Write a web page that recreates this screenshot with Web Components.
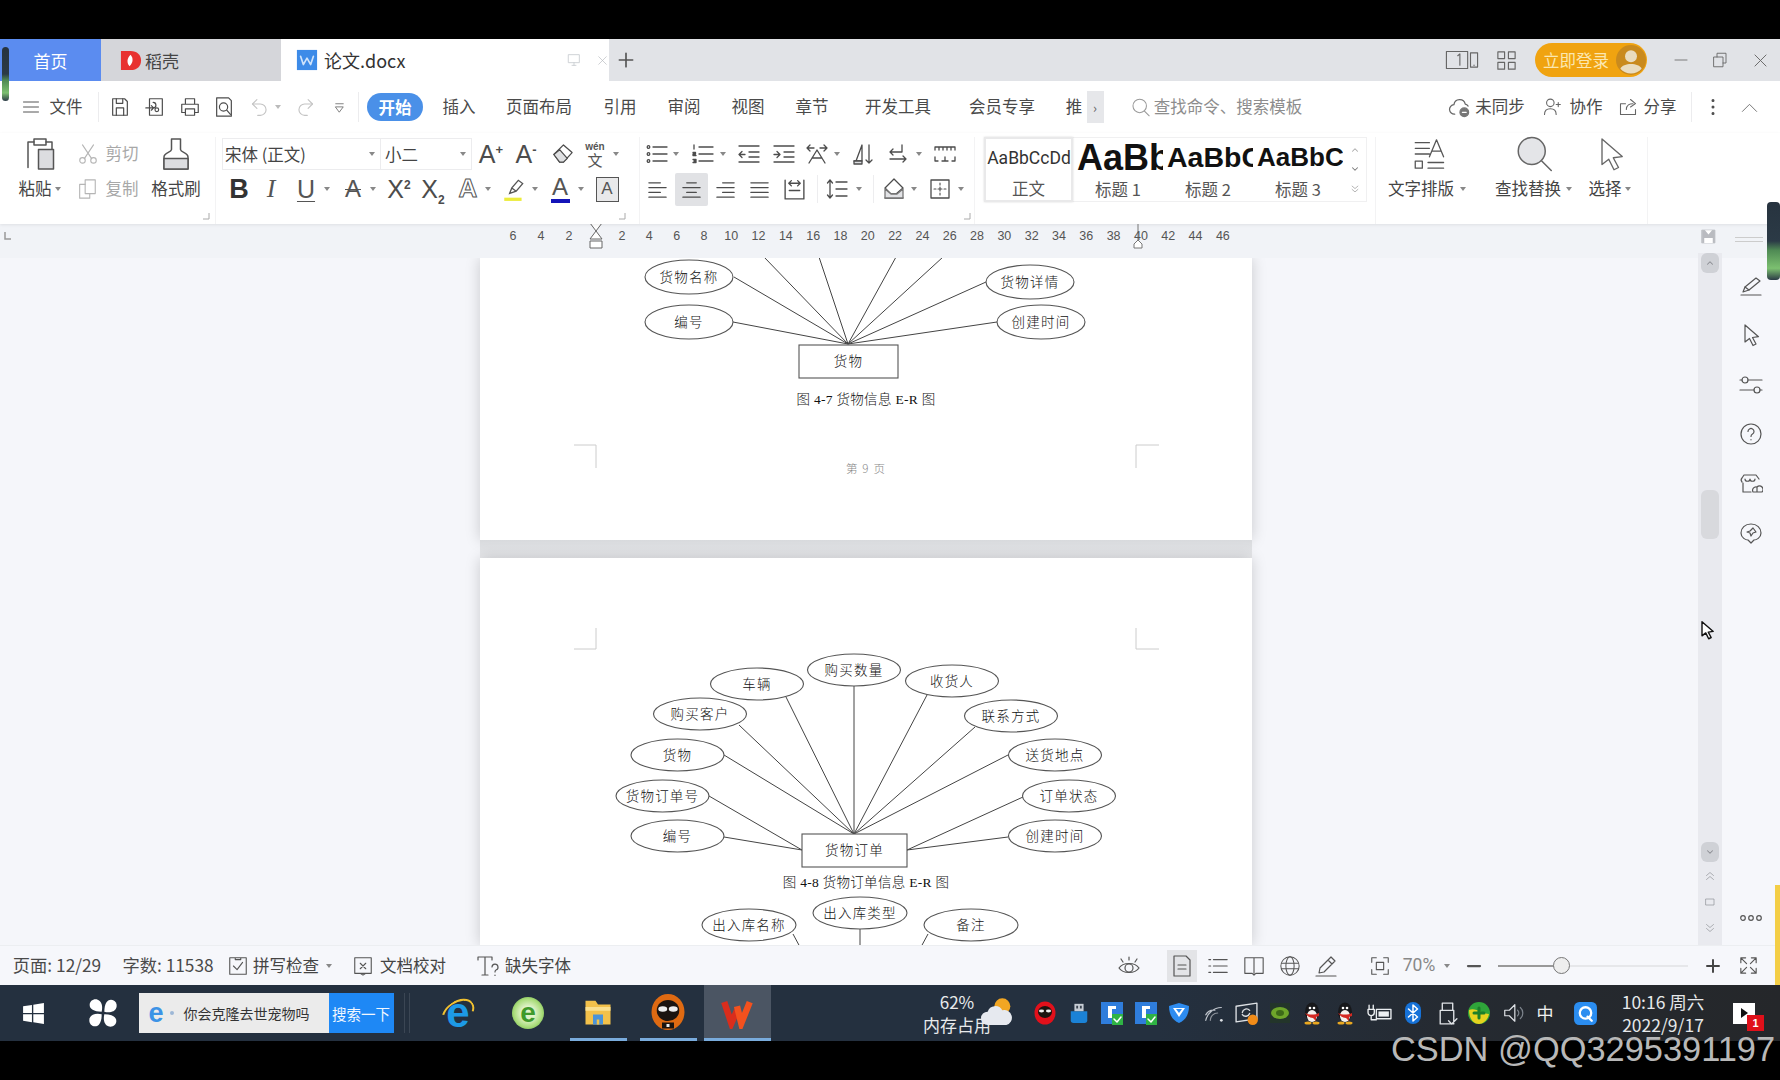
<!DOCTYPE html>
<html lang="zh">
<head>
<meta charset="utf-8">
<title>论文.docx</title>
<style>
  html, body { margin: 0; height: 100%; background: #000; overflow: hidden; }
  body { font-family: "Noto Sans CJK SC", "Noto Sans", sans-serif; color: #444; }
</style>
</head>
<body>
<screen-frame>
  <wps-tabbar></wps-tabbar>
  <wps-menubar></wps-menubar>
  <wps-ribbon></wps-ribbon>
  <wps-ruler></wps-ruler>
  <wps-workspace></wps-workspace>
  <wps-statusbar></wps-statusbar>
  <win-taskbar></win-taskbar>
</screen-frame>
<screen-overlays></screen-overlays>

<script>
// Iconos dibujados a mano, viewBox 24x24
const ICONS = {
  menu: '<path d="M3 6h18M3 12h18M3 18h18"/>',
  save: '<path d="M4 3h13l3 3v15H4z"/><path d="M8 21v-8h8v8M8 3v5h7V3"/>',
  exportdoc: '<path d="M6 3h14v18H6z"/><path d="M2 13h8a3 3 0 0 0 0-6M8 10.500L10.500 13 8 15.500"/><circle cx="14" cy="15" r="2"/>',
  print: '<path d="M7 9V3h10v6M7 18H3V9h18v9h-4"/><path d="M7 14h10v7H7z"/>',
  preview: '<path d="M4 2h13l3 3v17H4z"/><circle cx="11.500" cy="12" r="4.500"/><path d="M15 15.500l4 4.500"/>',
  undo: '<path d="M9 3L4 8l5 5"/><path d="M4 8h9a6.500 6.500 0 0 1 0 13h-3"/>',
  redo: '<path d="M15 3l5 5-5 5"/><path d="M20 8h-9a6.500 6.500 0 0 0 0 13h3"/>',
  qa: '<path d="M6 6h12M6 11h12l-6 8z"/>',
  paste: '<path d="M4 21V4h4V2h8v2h4v5"/><path d="M8 4v2h8V4"/><path d="M11 9h10v13H11z" fill="#dcdde0"/>',
  cut: '<circle cx="6" cy="19" r="3"/><circle cx="18" cy="19" r="3"/><path d="M8 17L18 2M16 17L6 2"/>',
  copy: '<path d="M10 2h11v15H10z"/><path d="M10 7H4v15h11v-5"/>',
  brush: '<path d="M9 2h6v7c0 2 5 2 5 5v8H4v-8c0-3 5-3 5-5z"/><path d="M4 15h16v7H4z" fill="#dcdde0"/>',
  eraser: '<path d="M3 12L13 2l9 8-9 10H9z"/><path d="M3 12l6 8h4l4-4-8-9z" fill="#dfe0e2"/>',
  bullets: '<circle cx="3.500" cy="5" r="1.300"/><circle cx="3.500" cy="12" r="1.300"/><circle cx="3.500" cy="19" r="1.300"/><path d="M8 5h14M8 12h14M8 19h14"/>',
  numbers: '<path d="M8 5h14M8 12h14M8 19h14"/><path d="M3 3v4M2 10.500h2.500V12H2v1.500h3M2 17.500h3V19H3h2v1.500H2"/>',
  outdent: '<path d="M2 4h20M12 10h10M12 15h10M2 20h20M8 12.500H2M5 9.500l-3 3 3 3"/>',
  indent: '<path d="M2 4h20M12 10h10M12 15h10M2 20h20M2 12.500h6M5 9.500l3 3-3 3"/>',
  cjk: '<path d="M2 6h7M5 3L2 6l3 3M22 6h-7M19 3l3 3-3 3M12 8L4 21M12 8l8 13M7 16h10"/>',
  sort: '<path d="M5 19L11 3v16H3"/><path d="M3 19h8v3H3z" fill="#dcdde0"/><path d="M18 3v18M15 18l3 3 3-3"/>',
  linebreak: '<path d="M16 3v7H4M7 7l-3 3 3 3M4 17h16M17 14l3 3-3 3"/>',
  rulers: '<path d="M2 5h20v3M2 5v3M6 5v3M10 5v3M14 5v3M18 5v3M2 15v4h3M22 15v4h-3M12 15v4M9 19h6"/>',
  left: '<path d="M3 5h12M3 10h18M3 15h12M3 20h18"/>',
  center: '<path d="M7 5h10M3 10h18M7 15h10M3 20h18"/>',
  right: '<path d="M9 5h12M3 10h18M9 15h12M3 20h18"/>',
  justify: '<path d="M3 5h18M3 10h18M3 15h18M3 20h18"/>',
  dist: '<path d="M3 3v18M21 3v18M3 21h18M7 6h10M9 3.500L6.500 6 9 8.500M15 3.500L17.500 6 15 8.500M7 13h10"/>',
  linespace: '<path d="M5 3v18M2.500 6L5 3l2.500 3M2.500 18L5 21l2.500-3M11 5h11M11 12h11M11 19h11"/>',
  shading: '<path d="M12 2l9 9-7 6H9l-6-6z"/><path d="M3 21h18"/><path d="M3 12l6 5h6l6-5v9H3z" fill="#e2e3e6" stroke="#777"/>',
  border: '<path d="M3 3h18v18H3z"/><path d="M12 6v2M12 10v4M12 16v2M6 12h2M10 12h4M16 12h2" stroke-width="1.100"/>',
  textlayout: '<path d="M3 4h10M3 8h10M3 12h10M13 14L18 2l5 12M15 10h6M3 17h5v5H3zM12 18h11M12 22h11"/>',
  search: '<circle cx="11" cy="10" r="8.500"/><path d="M17 16.500l6 6"/>',
  searchfill: '<circle cx="10.500" cy="10" r="9" fill="#e4e5e8"/><path d="M17 16.500l6.500 6.500"/>',
  cursor: '<path d="M6 2v17l4.500-3.500 3.500 7 3-1.500-3.500-6.500 6-.8z"/>',
  cloud: '<path d="M7 19a5 5 0 0 1-.8-10A6 6 0 0 1 18 8.500a5 5 0 0 1 3 2"/><circle cx="17" cy="17" r="4.500" fill="#777" stroke="#777"/><path d="M15 17h4" stroke="#fff"/>',
  collab: '<circle cx="10" cy="7" r="4.500"/><path d="M3 21c0-5 3-7 7-7s7 2 7 7M17 9h5M19.500 6.500v5"/>',
  share: '<path d="M9 8H3v13h18v-6"/><path d="M10 15c0-5 4-7 8-7M15 3l6 5-6 4"/>',
  dots: '<circle cx="12" cy="5" r="1" fill="#555"/><circle cx="12" cy="12" r="1" fill="#555"/><circle cx="12" cy="19" r="1" fill="#555"/>',
  chevup: '<path d="M3 17l9-9 9 9"/>',
  monitor: '<path d="M4 4h16v12H4zM9 20h6M12 16v4"/>',
  close: '<path d="M5 5l14 14M19 5L5 19"/>',
  plus: '<path d="M4 12h16M12 4v16"/>',
  reader: '<path d="M1 6h15v12H1zM1 18h15M18 7h5v10h-5zM20.500 15.500v.3M9 9l1.500-1.300v8"/>',
  grid: '<path d="M3 3h7v7H3zM14 3h7v7h-7zM3 14h7v7H3zM14 14h7v7h-7z"/>',
  minimize: '<path d="M4 12h16"/>',
  restore: '<path d="M4 8h12v13H4zM8 8V3h12v13h-4"/>',
  check: '<path d="M3 3h18v18H3zM9 3v2h6V3"/><path d="M7 12l4 4 6-8"/>',
  proof: '<path d="M3 3h18v17H3zM9 20l3 2 3-2M9 9l6 6M15 9l-6 6"/>',
  fontmiss: '<path d="M2 3h14M9 3v18M6 21h6M16 3v3M2 3v3"/><path d="M16 13a3 3 0 1 1 4 3c-1 .5-1 1-1 2M19 21v.5"/>',
  eye: '<path d="M2 14c4-6 16-6 20 0-4 6-16 6-20 0z"/><circle cx="12" cy="14" r="4"/><path d="M12 3v3M4 5l2 3M20 5l-2 3"/>',
  pageview: '<path d="M4 2h12l4 4v16H4z"/><path d="M8 11h8M8 15h8"/>',
  outline: '<path d="M7 5h15M7 12h15M7 19h15M2 5h2M2 12h2M2 19h2"/>',
  book: '<path d="M2 3h20v17h-8l-2 2-2-2H2zM12 3v17"/>',
  globe: '<circle cx="12" cy="12" r="10"/><ellipse cx="12" cy="12" rx="4.500" ry="10"/><path d="M2.500 9h19M2.500 15h19"/>',
  pen: '<path d="M2 22h20M5 19l1-5L17 3l4 4-11 11zM14 6l4 4"/>',
  fit: '<path d="M3 8V3h5M16 3h5v5M21 16v5h-5M8 21H3v-5M8 8h8v8H8z"/>',
  minus: '<path d="M4 12h16" stroke-width="3"/>',
  plusb: '<path d="M4 12h16M12 4v16" stroke-width="2.600"/>',
  expand: '<path d="M4 4l6 6M4 9V4h5M20 4l-6 6M15 4h5v5M4 20l6-6M4 15v5h5M20 20l-6-6M20 15v5h-5"/>',
  railpen: '<path d="M2 21h20M4 18l2-5L17 4l4 3-11 9z"/><path d="M6 13l4 3"/>',
  sliders: '<path d="M9 7h14M1 7h2M1 17h14M21 17h2"/><circle cx="6" cy="7" r="3"/><circle cx="18" cy="17" r="3"/>',
  help: '<circle cx="12" cy="12" r="10"/><path d="M9 9.500a3 3 0 1 1 4.500 2.600c-1 .6-1.500 1.200-1.500 2.400M12 17.500v.3"/>',
  store: '<path d="M3 10a3 3 0 0 1 0-4l2-3h12l3 4M4 11v9h8M6 7c0 3 5 3 5 0M11 7c0 3 5 3 5 0"/><path d="M14 20a3.500 3.500 0 0 1 4-5 3.500 3.500 0 0 1 5 5zM18 15v5"/>',
  pinbubble: '<path d="M12 3c6 0 10 4 10 9s-5 7-7 7l-3 3-3-3c-2 0-7-2-7-7s4-9 10-9z"/><path d="M14 7l3 4-3 1-2 3-1-3-3-1 3-1z"/>',
  ooo: '<circle cx="4" cy="12" r="2.300"/><circle cx="12" cy="12" r="2.300"/><circle cx="20" cy="12" r="2.300"/>',
  stepup: '<path d="M5 11l7-6 7 6M5 19l7-6 7 6"/>',
  stepdown: '<path d="M5 5l7 6 7-6M5 13l7 6 7-6"/>',
  square: '<path d="M4 6h16v12H4z"/>',
  tri: '<path d="M6 15l6-6 6 6" stroke-width="2.500"/>',
  trid: '<path d="M6 9l6 6 6-6" stroke-width="2.500"/>',
  savebox: '<path d="M3 3h18v18H3z" fill="#b9bbc0" stroke="#b9bbc0"/><path d="M7 3l5 6 5-6zM6 14h12v7H6z" fill="#fff" stroke="none"/>',
  // logos de color
  daoke: '<path d="M2 2h10c7 0 11 4 11 10s-4 10-11 10H2z" fill="#e8312f" stroke="none"/><path d="M12 6c3 3 3 8-1 12-3-3-3-8 1-12z" fill="#fff" stroke="none"/>',
  wdoc: '<path d="M1 1h22v22H1z" fill="#3d8be8" stroke="none"/><path d="M5 8l3 9 4-7 4 7 3-9" stroke="#cfe3fb" stroke-width="1.800" fill="none"/>',
  avatar: '<circle cx="12" cy="12" r="12" fill="#c98a1e" stroke="none"/><circle cx="12" cy="9" r="4.800" fill="#e9dcc0" stroke="none"/><path d="M3.500 19c2-5 15-5 17 0-4 5-13 5-17 0z" fill="#e9dcc0" stroke="none"/>',
  win: '<path d="M2 5l8.500-1.200V11.500H2zM11.800 3.600L22 2v9.500H11.800zM2 12.800h8.500v7.500L2 19zM11.800 12.800H22V22l-10.200-1.500z" fill="#fff" stroke="none"/>',
  pinwheel: '<g fill="#fff" stroke="none"><path d="M11 11C5 11 2 9 2 6c0-3 3-5 6-4 3 1 4 5 3 9z"/><path d="M13 11c0-6 2-9 5-9 3 0 5 3 4 6-1 3-5 4-9 3z"/><path d="M13 13c6 0 9 2 9 5 0 3-3 5-6 4-3-1-4-5-3-9z"/><path d="M11 13c0 6-2 9-5 9-3 0-5-3-4-6 1-3 5-4 9-3z"/></g>',
  folder: '<path d="M2 3h8l2 3h10v16H2z" fill="#f3c14b" stroke="none"/><path d="M2 8h20v3H2z" fill="#fbe08f" stroke="none"/><path d="M8 14h8v8H8z" fill="#4b93d8" stroke="none"/><path d="M11 18h2v4h-2z" fill="#f3c14b" stroke="none"/>',
  fox: '<ellipse cx="12" cy="12" rx="11" ry="12" fill="#df6a12" stroke="none"/><ellipse cx="12" cy="11" rx="7.500" ry="7" fill="#1b1410" stroke="none"/><ellipse cx="8.500" cy="10" rx="3" ry="1.800" fill="#eee" stroke="none"/><ellipse cx="15.500" cy="10" rx="3" ry="1.800" fill="#eee" stroke="none"/><path d="M8 19h8v4H8z" fill="#1b1410" stroke="none"/><path d="M11 20h2v2h-2z" fill="#eee" stroke="none"/>',
  wps: '<path d="M3 5l5 15 4-9" stroke="#d92d1c" stroke-width="4.500" stroke-linejoin="miter" stroke-linecap="butt"/><path d="M12 8l3 12 6-15" stroke="#f4511e" stroke-width="4.500" stroke-linejoin="miter" stroke-linecap="butt"/>',
  weather: '<circle cx="16" cy="7" r="6" fill="#f2a623" stroke="none"/><path d="M5 21a5 5 0 0 1 0-10 6 6 0 0 1 11-1 5.500 5.500 0 0 1 3 11z" fill="#e6e9ef" stroke="none"/>',
  redfox: '<ellipse cx="12" cy="12" rx="10.500" ry="11.500" fill="#e2101b" stroke="none"/><ellipse cx="12" cy="11" rx="7" ry="6" fill="#1b1410" stroke="none"/><ellipse cx="8.500" cy="10" rx="2.600" ry="1.400" fill="#eee" stroke="none"/><ellipse cx="15.500" cy="10" rx="2.600" ry="1.400" fill="#eee" stroke="none"/>',
  usbblue: '<path d="M3 10h18v10a3 3 0 0 1-3 3H6a3 3 0 0 1-3-3z" fill="#1b82d6" stroke="none"/><path d="M7 2h10v8H7z" fill="#c6ccd4" stroke="none"/><path d="M9 4h2v3H9zM13 4h2v3h-2z" fill="#3a4350" stroke="none"/>',
  tgreen: '<path d="M1 1h22v22H1z" fill="#2f7ddc" stroke="none"/><path d="M8 5h8v3h-4v9H8z" fill="#fff" stroke="none"/><path d="M12 13h11v11H12z" fill="#2fb344" stroke="none"/><path d="M14 18l3 3 4-5" stroke="#fff" stroke-width="1.500" fill="none"/>',
  shield: '<path d="M12 2l10 3c0 8-3 14-10 17C5 19 2 13 2 5z" fill="#2e8cf0" stroke="none"/><path d="M6 7l6 9 6-9z" fill="#fff" stroke="none"/><path d="M9 8l3 4 3-4z" fill="#2e8cf0" stroke="none"/>',
  wifi: '<path d="M3 20a18 18 0 0 1 17-14M3 14a10 10 0 0 1 10-5" stroke="#bfc4cb"/><path d="M8 20a8 8 0 0 1 8-8" stroke="#8d939b"/><circle cx="20" cy="20" r="1.500" fill="#dfe2e6" stroke="none"/>',
  sync: '<path d="M2 5l20-3v15L2 20z" stroke="#dde0e4"/><path d="M8 11a4 4 0 0 1 7-2M15 12a4 4 0 0 1-7 1" stroke="#dde0e4"/><circle cx="18" cy="18" r="5" fill="#f28c18" stroke="none"/>',
  nvidia: '<path d="M2 2h20v20H2z" fill="#23352a" stroke="none"/><ellipse cx="12" cy="12" rx="9" ry="6" fill="#6ea62a" stroke="none"/><ellipse cx="12" cy="12" rx="4" ry="3" fill="#3d6a18" stroke="none"/>',
  qq: '<ellipse cx="12" cy="11" rx="7" ry="9.500" fill="#17181b" stroke="none"/><ellipse cx="12" cy="15" rx="5" ry="6" fill="#f5f2ec" stroke="none"/><path d="M5 12c4 2 10 2 14 0v3l-3 1v4l-3-3c-3 0-6-2-8-5z" fill="#d42a22" stroke="none"/><ellipse cx="8" cy="22" rx="3.500" ry="1.500" fill="#eaa820" stroke="none"/><ellipse cx="16" cy="22" rx="3.500" ry="1.500" fill="#eaa820" stroke="none"/><circle cx="10" cy="7" r="1.300" fill="#fff" stroke="none"/><circle cx="14" cy="7" r="1.300" fill="#fff" stroke="none"/>',
  power: '<path d="M9 8h14v9H9z" stroke="#eceff2"/><path d="M11 10h10v5H11z" fill="#eceff2" stroke="none"/><path d="M2 4v4M6 4v4M1 8h6v3a3 3 0 0 1-6 0zM4 14v4h5" stroke="#eceff2"/>',
  bt: '<rect x="4" y="1" width="16" height="22" rx="8" fill="#1672d8" stroke="none"/><path d="M7.500 8l9 8-4.500 4V4l4.500 4-9 8" stroke="#fff" fill="none" stroke-width="1.500"/>',
  usbw: '<path d="M7 2h10v7H7zM5 9h13v13H5zM13 19l3 3 5-5" stroke="#dfe2e6"/>',
  greenplus: '<circle cx="12" cy="12" r="11" fill="#2fa53a" stroke="none"/><path d="M2 9c6-3 14 4 20 4-1 6-6 10-10 10-6 0-10-6-10-14z" fill="#e6d31f" stroke="none"/><path d="M12 7v10M7 12h10" stroke="#1c7f2a" stroke-width="3"/>',
  speaker: '<path d="M3 9h5l6-6v18l-6-6H3z" stroke="#dfe2e6"/><path d="M17 9a4 4 0 0 1 0 6M20 6a8 8 0 0 1 0 12" stroke="#7d848c"/>',
  qblue: '<rect x="1" y="1" width="22" height="22" rx="5" fill="#2b8df0" stroke="none"/><circle cx="12" cy="11.500" r="5.500" stroke="#fff" stroke-width="2.200"/><path d="M14 15l4 4" stroke="#fff" stroke-width="2.200"/>',
  cursorw: '<path d="M6 2v17l4.500-3.500 3.500 7 3-1.500-3.500-6.500 6-.8z" fill="#fff" stroke="#111" stroke-width="1.700"/>'
};

const ic = (n, s = 22, c = '#4c4c4c', w = 1.300) => `<ui-icon n="${n}" s="${s}" c="${c}" w="${w}"></ui-icon>`;
const tx = (t, s = 16.500, c = '#444', x = '') => `<span style="font-size:${s}px;line-height:1.200;color:${c};${x}">${t}</span>`;
const arw = (c = '#888') => `<i style="display:block;width:0;height:0;border:3.500px solid transparent;border-top:4px solid ${c};border-bottom:0"></i>`;

// Reparte hijos en una fila flex: cada [cx, html] queda centrado en cx
function spread(origin, items, style = '') {
  let prevRight = origin;
  const cells = items.map(([cx, html], i) => {
    const gapL = i ? cx - items[i - 1][0] : (cx - origin) * 2;
    const gapR = i < items.length - 1 ? items[i + 1][0] - cx : gapL;
    const w = Math.min(gapL, gapR);
    const ml = cx - w / 2 - prevRight;
    prevRight = cx + w / 2;
    return `<div class="c" style="width:${w}px;margin-left:${ml}px">${html}</div>`;
  }).join('');
  return `<div class="row" style="${style}">${cells}</div>`;
}

const BASE = `
  .row { display: flex; align-items: center; }
  .c { flex: none; display: flex; align-items: center; justify-content: center; white-space: nowrap; }
  .c > * { flex: none; }
`;

class UiIcon extends HTMLElement {
  constructor() {
    super();
    this.attachShadow({ mode: 'open' });
  }
  connectedCallback() {
    const s = this.getAttribute('s') || 22;
    const c = this.getAttribute('c') || '#4c4c4c';
    const w = this.getAttribute('w') || 1.300;
    this.shadowRoot.innerHTML = `
      <style>:host { display: inline-flex; flex: none; } svg { display: block; }</style>
      <svg width="${s}" height="${s}" viewBox="0 0 24 24" fill="none" stroke="${c}" stroke-width="${w}"
           stroke-linecap="round" stroke-linejoin="round">${ICONS[this.getAttribute('n')] || ''}</svg>`;
  }
}
customElements.define('ui-icon', UiIcon);

class ScreenFrame extends HTMLElement {
  constructor() {
    super();
    this.attachShadow({ mode: 'open' });
    this.shadowRoot.innerHTML = `
      <style>
        :host { display: flex; flex-direction: column; width: 1780px; height: 1080px; padding: 39px 0; box-sizing: border-box; background: #000; overflow: hidden; }
      </style>
      <slot></slot>`;
  }
}
customElements.define('screen-frame', ScreenFrame);

class WpsTabbar extends HTMLElement {
  constructor() {
    super();
    this.attachShadow({ mode: 'open' });
    this.shadowRoot.innerHTML = `
      <style>
        ${BASE}
        :host { display: flex; height: 42px; background: #e1e3e7; flex: none; }
        .tab { flex: none; display: flex; align-items: center; box-sizing: border-box; }
        .home { width: 101px; background: #5b8cf0; justify-content: center; color: #fff; font-size: 17px; }
        .daoke { width: 180px; background: #d5d6da; padding-left: 18px; gap: 3px; font-size: 17px; color: #444; }
        .doc { width: 328px; background: #fff; padding-left: 15px; gap: 6px; font-size: 18px; color: #333; }
        .doc .tools { margin-left: auto; display: flex; gap: 14px; align-items: center; }
        .plus { width: 34px; display: flex; align-items: center; justify-content: center; }
        .pill { display: flex; align-items: center; justify-content: space-between; box-sizing: border-box; width: 112px; height: 34px; padding: 0 1px 0 8px; border-radius: 17px; background: #f0a310; color: #fbe7b0; font-size: 16.500px; }
      </style>
      <div class="tab home">首页</div>
      <div class="tab daoke">${ic('daoke', 23)}<span>稻壳</span></div>
      <div class="tab doc">${ic('wdoc', 22)}<span>论文.docx</span>
        <span class="tools">${ic('monitor', 16, '#c9ccd1')}${ic('close', 13, '#b5b8bd', 1.200)}</span></div>
      <div class="plus">${ic('plus', 20, '#555', 2)}</div>
      ${spread(643, [
        [1463, ic('reader', 34, '#666', .8)],
        [1507, ic('grid', 23, '#666', 1.200)],
        [1592, `<div class="pill"><span>立即登录</span>${ic('avatar', 30)}</div>`],
        [1682, ic('minimize', 18, '#777', 1.300)],
        [1721, ic('restore', 18, '#666', 1.200)],
        [1761, ic('close', 19, '#666', 1.200)]
      ])}`;
  }
}
customElements.define('wps-tabbar', WpsTabbar);

class WpsMenubar extends HTMLElement {
  constructor() {
    super();
    this.attachShadow({ mode: 'open' });
    const m = t => tx(t, 16.500, '#4a4a4a');
    this.shadowRoot.innerHTML = `
      <style>
        ${BASE}
        :host { display: block; height: 52px; background: #fff; flex: none; }
        .row { height: 52px; }
        .on { display: flex; align-items: center; justify-content: center; width: 56px; height: 28px; border-radius: 14px; background: #4a90e8; color: #fff; font-size: 16.500px; font-weight: 700; }
        .more { width: 17px; height: 32px; background: #e6e7ea; display: flex; align-items: center; justify-content: center; font-size: 13px; color: #666; }
        .sep { width: 1px; height: 30px; background: #ececee; }
      </style>
      ${spread(0, [
        [31, ic('menu', 20, '#555', 1.200)],
        [66, m('文件')],
        [98, '<div class="sep"></div>'],
        [120, ic('save', 22)],
        [155, ic('exportdoc', 22)],
        [190, ic('print', 22)],
        [224, ic('preview', 22)],
        [259, ic('undo', 21, '#c4c4c4')],
        [278, arw('#bbb')],
        [305, ic('redo', 21, '#c4c4c4')],
        [339, ic('qa', 15, '#666')],
        [358, '<div class="sep"></div>'],
        [395, '<div class="on">开始</div>'],
        [459, m('插入')],
        [539, m('页面布局')],
        [620, m('引用')],
        [684, m('审阅')],
        [748, m('视图')],
        [812, m('章节')],
        [898, m('开发工具')],
        [1002, m('会员专享')],
        [1074, m('推')],
        [1095, '<div class="more">›</div>'],
        [1140, ic('search', 19, '#999', 1.300)],
        [1228, tx('查找命令、搜索模板', 16.500, '#8d8d8d')],
        [1459, ic('cloud', 23, '#666')],
        [1500, m('未同步')],
        [1552, ic('collab', 20, '#666')],
        [1586, m('协作')],
        [1628, ic('share', 20, '#666')],
        [1660, m('分享')],
        [1691, '<div class="sep"></div>'],
        [1713, ic('dots', 22)],
        [1749, ic('chevup', 19, '#666', 1.100)]
      ])}`;
  }
}
customElements.define('wps-menubar', WpsMenubar);

class WpsRibbon extends HTMLElement {
  constructor() {
    super();
    this.attachShadow({ mode: 'open' });
    const L = 'font-family:\'Liberation Sans\',sans-serif;';
    const corner = '<svg width="8" height="8"><path d="M7 1v6H1" fill="none" stroke="#aaa"/></svg>';
    const a = (x, sz = 24, extra = '') => tx(x, sz, '#4c4c4c', L + extra);
    const R1 = 'height:34px', R2 = 'height:36px', R3 = 'height:17px';

    const clip = [
      spread(0, [[40, ic('paste', 36, '#555', 1)], [88, ic('cut', 22, '#b5b5b5', 1.200)], [122, tx('剪切', 16.500, '#a8a8a8')], [176, ic('brush', 36, '#555', 1)]], R1),
      spread(0, [[35, tx('粘贴')], [58, arw()], [87, ic('copy', 22, '#b5b5b5', 1.200)], [122, tx('复制', 16.500, '#a8a8a8')], [176, tx('格式刷')]], R2),
      spread(0, [[206, corner]], R3)
    ].join('');

    const font = [
      `<div class="row" style="${R1}">
        <div class="fbox name"><span>宋体 (正文)</span>${arw()}</div>
        <div class="fbox size"><span>小二</span>${arw()}</div>
        ${spread(473, [
          [492, a('A<sup style="font-size:13px;font-weight:700;line-height:0">+</sup>', 25)],
          [527, a('A<sup style="font-size:13px;font-weight:700;line-height:0">-</sup>', 25)],
          [563, ic('eraser', 23)],
          [596, `<span class="wen"><b>wén</b><u>文</u></span>`],
          [617, arw()]
        ])}
      </div>`,
      spread(216, [
        [239, a('B', 27, 'font-weight:700;color:#333')],
        [271, tx('I', 26, '#555', 'font-family:\'Liberation Serif\',serif;font-style:italic')],
        [306, tx('U', 25, '#555', L + 'text-decoration:underline;text-decoration-thickness:1px;text-underline-offset:3px')],
        [327, arw()],
        [353, tx('A', 24, '#555', L + 'text-decoration:line-through;text-decoration-thickness:1px')],
        [373, arw()],
        [399, a('X<sup style="font-size:12px;line-height:0;font-weight:700">2</sup>', 25)],
        [433, a('X<sub style="font-size:12px;line-height:0;font-weight:700">2</sub>', 25)],
        [468, tx('A', 26, '#fff', L + 'font-weight:700;-webkit-text-stroke:1px #555')],
        [488, arw()],
        [514, '<svg width="26" height="26" viewBox="0 0 24 24" fill="none" stroke="#555" stroke-width="1.200"><path d="M8 16l2-5 6-7 4 3-6 7zM10 11l4 3"/><path d="M3 20h16v3H3z" fill="#ecec3a" stroke="none"/></svg>'],
        [535, arw()],
        [560, `<span style="display:flex;flex-direction:column;align-items:center;line-height:22px">${tx('A', 24, '#555', L + 'line-height:22px;')}<i style="display:block;width:19px;height:4px;background:#1414b8;margin-top:1px"></i></span>`],
        [581, arw()],
        [607, `<span style="display:flex;width:23px;height:25px;box-sizing:border-box;border:1px solid #555;background:#e9e9ea;align-items:center;justify-content:center">${tx('A', 17, '#555', L)}</span>`]
      ], R2),
      spread(216, [[622, corner]], R3)
    ].join('');

    const para = [
      spread(640, [
        [657, ic('bullets', 24)], [676, arw()], [703, ic('numbers', 24)], [723, arw()],
        [749, ic('outdent', 24)], [784, ic('indent', 24)], [817, ic('cjk', 24)], [837, arw()],
        [863, ic('sort', 24)], [898, ic('linebreak', 24)], [919, arw()], [945, ic('rulers', 24)]
      ], R1),
      spread(640, [
        [657, ic('left', 23)], [691, `<span class="sel">${ic('center', 23)}</span>`], [725, ic('right', 23)], [759, ic('justify', 23)],
        [794, ic('dist', 25)], [817, '<i class="sp"></i>'], [837, ic('linespace', 24)], [859, arw()],
        [873, '<i class="sp"></i>'], [894, ic('shading', 24)], [914, arw()], [940, ic('border', 24)], [961, arw()]
      ], R2),
      spread(640, [[967, corner]], R3)
    ].join('');

    const card = (sample, label, cls = '') => `<div class="card ${cls}"><div class="sample">${sample}</div><div class="label">${label}</div></div>`;

    const tools = [
      spread(1376, [[1428, ic('textlayout', 34, '#555', .9)], [1534, ic('searchfill', 36, '#666', 1)], [1611, ic('cursor', 36, '#666', .9)]], R1),
      spread(1376, [[1421, tx('文字排版')], [1463, arw()], [1528, tx('查找替换')], [1569, arw()], [1605, tx('选择')], [1628, arw()]], R2)
    ].join('');

    this.shadowRoot.innerHTML = `
      <style>
        ${BASE}
        :host { display: flex; height: 91px; background: #fff; flex: none; box-sizing: border-box; box-shadow: 0 1px 3px rgba(0,0,0,.08); position: relative; padding-top: 4px; }
        .g { flex: none; box-sizing: border-box; border-right: 1px solid #f3f3f4; }
        .fbox { flex: none; box-sizing: border-box; height: 32px; display: flex; align-items: center; justify-content: space-between; border: 1px solid #ececee; font-size: 16.500px; color: #444; padding: 0 5px 0 2px; }
        .name { width: 159px; margin-left: 6px; }
        .size { width: 92px; margin-left: -1px; padding-left: 4px; }
        .wen { display: flex; flex-direction: column; align-items: center; color: #555; }
        .wen b { font: 700 10px/10px "Liberation Sans", sans-serif; }
        .wen u { text-decoration: none; font-size: 15px; line-height: 15px; }
        .sel { display: flex; align-items: center; justify-content: center; width: 33px; height: 33px; background: #e1e2e5; border-radius: 2px; }
        .sp { display: block; width: 1px; height: 28px; background: #ededef; }
        .gallery { display: flex; margin-left: 9px; width: 383px; height: 65px; box-sizing: border-box; border: 1px solid #f0f0f1; }
        .card { flex: none; width: 90px; display: flex; flex-direction: column; overflow: hidden; box-sizing: border-box; }
        .card.first { width: 89px; border: 2px solid #e9e9ea; box-shadow: 0 0 2px rgba(0,0,0,.15); margin: -1px 0 -1px -1px; }
        .sample { height: 39px; display: flex; align-items: center; padding-left: 4px; white-space: nowrap; font-family: "Liberation Sans", sans-serif; color: #111; font-weight: 700; }
        .first .sample { font-family: Roboto, sans-serif; font-weight: 400; color: #333; font-size: 17.500px; padding-left: 1px; justify-content: center; }
        .label { text-align: center; font-size: 16.500px; color: #555; line-height: 24px; }
        .gs { flex: 1; display: flex; flex-direction: column; align-items: center; justify-content: space-around; padding: 2px 0; }
      </style>
      <div class="g" style="width:216px">${clip}</div>
      <div class="g" style="width:424px">${font}</div>
      <div class="g" style="width:335px">${para}</div>
      <div class="g" style="width:401px"><div class="gallery">
        ${card('AaBbCcDd', '正文', 'first')}
        ${card('<span style="font-size:36px">AaBb</span>', '标题 1')}
        ${card('<span style="font-size:28.500px">AaBbC</span>', '标题 2')}
        ${card('<span style="font-size:26px">AaBbCc</span>', '标题 3')}
        <div class="gs">${ic('tri', 10, '#aaa')}${ic('trid', 10, '#777')}${ic('stepdown', 10, '#777')}</div>
      </div></div>
      <div class="g" style="width:272px">${tools}</div>`;
  }
}
customElements.define('wps-ribbon', WpsRibbon);

class WpsRuler extends HTMLElement {
  constructor() {
    super();
    this.attachShadow({ mode: 'open' });
    const num = n => `<span class="n">${n}</span>`;
    const items = [[8, '<svg width="8" height="8"><path d="M1 0v7h6" fill="none" stroke="#999" stroke-width="1.500"/></svg>'],
      [513, num(6)], [541, num(4)], [569, num(2)],
      [596, '<svg width="16" height="28" viewBox="0 0 16 28" fill="none" stroke="#666"><path d="M2 1h12L8 9zM8 9l6 8H2zM2 19h12v7H2z" fill="#fff"/></svg>']];
    for (let n = 2; n <= 46; n += 2) {
      const cx = 622 + (n - 2) / 2 * 27.320;
      items.push([cx, n === 40
        ? `<span class="m40"><svg width="14" height="25" viewBox="0 0 14 25" fill="none" stroke="#777"><path d="M7 0v16"/><path d="M3 20l4-4 4 4v4H3z" fill="#fff"/></svg>${num(40)}</span>`
        : num(n)]);
    }
    items.push([1709, ic('savebox', 17)]);
    items.push([1749, '<i class="bars"></i>']);
    this.shadowRoot.innerHTML = `
      <style>
        ${BASE}
        :host { display: block; height: 34px; background: #f1f3f7; flex: none; }
        .row { height: 24px; }
        .n { position: relative; font: 12.500px "Liberation Sans", sans-serif; color: #555; }
        .m40 { position: relative; display: flex; justify-content: center; }
        .m40 svg { position: absolute; top: -5px; left: -3px; }
        .c { height: 24px; }
        .bars { display: block; width: 28px; height: 3px; margin-top: 6px; border-top: 1px solid #ccc; border-bottom: 1px solid #ccc; }
      </style>
      ${spread(0, items)}`;
  }
}
customElements.define('wps-ruler', WpsRuler);

// Página del documento con su diagrama E-R en un SVG con las coordenadas de la pantalla
class ErPage extends HTMLElement {
  constructor() {
    super();
    this.attachShadow({ mode: 'open' });
    this.shadowRoot.innerHTML = `
      <style>
        :host { display: block; flex: none; width: 772px; background: #fff; box-shadow: 0 0 14px rgba(0,0,0,.18); }
        svg { display: block; }
        text { font-family: "Noto Sans CJK SC", sans-serif; font-weight: 300; fill: #111; font-size: 13.500px; letter-spacing: 1.200px; text-anchor: middle; dominant-baseline: central; }
        .cap { font-family: "Liberation Serif", "Noto Sans CJK SC", serif; letter-spacing: .3px; }
        .foot { font-size: 11.500px; fill: #888; }
        ellipse, rect { fill: #fff; stroke: #555; stroke-width: 1.100; }
        line { stroke: #444; stroke-width: 1; }
        .crop { fill: none; stroke: #ccc; stroke-width: 1; }
      </style>
      <svg></svg>`;
  }
  draw(y, h, { ellipses, rects, lines, texts, crops }) {
    const svg = this.shadowRoot.querySelector('svg');
    svg.setAttribute('width', 772);
    svg.setAttribute('height', h);
    svg.setAttribute('viewBox', `480 ${y} 772 ${h}`);
    this.style.height = h + 'px';
    svg.innerHTML =
      lines.map(l => `<line x1="${l[0]}" y1="${l[1]}" x2="${l[2]}" y2="${l[3]}"/>`).join('') +
      ellipses.map(e => `<ellipse cx="${e[0]}" cy="${e[1]}" rx="${e[2]}" ry="${e[3]}"/><text x="${e[0]}" y="${e[1] - 1}">${e[4]}</text>`).join('') +
      rects.map(r => `<rect x="${r[0]}" y="${r[1]}" width="${r[2]}" height="${r[3]}"/><text x="${r[0] + r[2] / 2}" y="${r[1] + r[3] / 2 - 1.500}">${r[4]}</text>`).join('') +
      texts.map(t => `<text class="${t[3]}" x="${t[0]}" y="${t[1]}">${t[2]}</text>`).join('') +
      crops.map(d => `<path class="crop" d="${d}"/>`).join('');
  }
}
customElements.define('er-page', ErPage);

class WpsWorkspace extends HTMLElement {
  constructor() {
    super();
    this.attachShadow({ mode: 'open' });
    this.shadowRoot.innerHTML = `
      <style>
        :host { display: flex; height: 687px; flex: none; background: #f5f6fa; }
        .doc { width: 1698px; flex: none; overflow: hidden; padding-left: 480px; box-sizing: border-box; display: flex; flex-direction: column; }
        .gap { flex: none; width: 772px; height: 18px; background: linear-gradient(#d8dadd, #e8e9ec); }
        .bar { width: 24px; flex: none; margin-top: -5px; background: #e9eaef; display: flex; flex-direction: column; align-items: center; box-sizing: border-box; }
        .btn { width: 18px; height: 20px; border-radius: 6px; background: #cfd1d6; display: flex; align-items: center; justify-content: center; flex: none; }
        .thumb { width: 18px; height: 49px; border-radius: 6px; background: #d8d9dd; margin-top: 217px; flex: none; }
        .bar .steps { display: flex; flex-direction: column; align-items: center; gap: 14px; margin-top: 8px; }
        .rail { flex: 1; display: flex; flex-direction: column; align-items: center; background: #f6f7fb; }
        .rail .icons { display: flex; flex-direction: column; align-items: center; gap: 25.400px; margin-top: 16px; }
        .rail .ooo { margin-top: 361px; }
      </style>
      <div class="doc">
        <er-page id="p1"></er-page>
        <div class="gap"></div>
        <er-page id="p2"></er-page>
      </div>
      <div class="bar">
        <div class="btn">${ic('tri', 10, '#8a8c92')}</div>
        <div class="thumb"></div>
        <div class="btn" style="margin-top:303px">${ic('trid', 10, '#8a8c92')}</div>
        <div class="steps">${ic('stepup', 12, '#8a8c92')}${ic('square', 12, '#8a8c92')}${ic('stepdown', 12, '#8a8c92')}</div>
      </div>
      <div class="rail">
        <div class="icons">
          ${ic('railpen', 24, '#555', 1.200)}${ic('cursor', 24, '#555', 1.200)}${ic('sliders', 24, '#555', 1.200)}
          ${ic('help', 24, '#555', 1.200)}${ic('store', 24, '#555', 1.200)}${ic('pinbubble', 24, '#555', 1.200)}
        </div>
        <div class="ooo">${ic('ooo', 24, '#555', 1.200)}</div>
      </div>`;

    const apex1 = [848, 345], apex2 = [854, 836];
    const to = (a, pts) => pts.map(p => [p[0], p[1], a[0], a[1]]);
    this.shadowRoot.getElementById('p1').draw(259, 282, {
      ellipses: [
        [689, 278, 44, 17, '货物名称'], [689, 323, 44, 17, '编号'],
        [1030, 283, 44, 17, '货物详情'], [1041, 323, 44, 17, '创建时间']
      ],
      rects: [[799, 346, 99, 33, '货物']],
      lines: to(apex1, [[734, 278], [733, 323], [764, 258], [819, 258], [896, 258], [943, 258], [986, 283], [997, 323]]),
      texts: [[866, 400, '图 4-7 货物信息 E-R 图', 'cap'], [866, 469, '第 9 页', 'foot']],
      crops: ['M574 446h22v23', 'M1159 446h-23v23']
    });
    this.shadowRoot.getElementById('p2').draw(560, 387, {
      ellipses: [
        [854, 672, 46.500, 16, '购买数量'], [757, 686, 46.500, 16, '车辆'], [952, 683, 46.500, 16, '收货人'],
        [700, 716, 46.500, 16, '购买客户'], [1011, 718, 46.500, 16, '联系方式'],
        [677.500, 757, 46.500, 16, '货物'], [1055, 757, 46.500, 16, '送货地点'],
        [662.500, 798, 46.500, 16, '货物订单号'], [1069, 798, 46.500, 16, '订单状态'],
        [677.500, 838, 46.500, 16, '编号'], [1055, 838, 46.500, 16, '创建时间'],
        [749, 927, 47, 16, '出入库名称'], [860, 915, 47, 16, '出入库类型'], [971, 927, 47, 16, '备注']
      ],
      rects: [[802, 836, 105, 33, '货物订单']],
      lines: [
        ...to(apex2, [[786, 699], [854, 688], [927, 697], [739, 727], [975, 729], [724, 757], [1008, 757]]),
        [709, 798, 802, 852], [724, 839, 802, 852], [1023, 799, 907, 852], [1008, 839, 907, 852],
        [793, 936, 800, 949], [860, 931, 860, 949], [928, 936, 921, 949]
      ],
      texts: [[866, 884, '图 4-8 货物订单信息 E-R 图', 'cap']],
      crops: ['M596 630v21h-22', 'M1136 630v21h23']
    });
  }
}
customElements.define('wps-workspace', WpsWorkspace);

class WpsStatusbar extends HTMLElement {
  constructor() {
    super();
    this.attachShadow({ mode: 'open' });
    const s = t => tx(t, 17.300, '#4a4a4a');
    this.shadowRoot.innerHTML = `
      <style>
        ${BASE}
        :host { display: block; height: 40px; background: #f6f7fb; flex: none; position: relative; border-top: 1px solid #eceef1; box-sizing: border-box; }
        .row { height: 39px; }
        .hl { display: flex; align-items: center; justify-content: center; width: 30px; height: 32px; background: #e3e4e7; }
        .track { position: relative; width: 190px; height: 2px; background: linear-gradient(90deg, #999 33%, #e6e7ea 33%); }
        .knob { position: absolute; left: 55px; top: -8px; width: 17px; height: 17px; box-sizing: border-box; border: 1.500px solid #777; border-radius: 50%; background: #eee; }
      </style>
      ${spread(0, [
        [57, s('页面: 12/29')],
        [168, s('字数: 11538')],
        [238, ic('check', 22, '#555', 1.200)],
        [286, tx('拼写检查')],
        [329, arw()],
        [363, ic('proof', 22, '#555', 1.200)],
        [413, tx('文档校对')],
        [488, ic('fontmiss', 24, '#555', 1.200)],
        [538, tx('缺失字体')],
        [1129, ic('eye', 24, '#555', 1.200)],
        [1182, `<span class="hl">${ic('pageview', 24, '#555', 1.200)}</span>`],
        [1218, ic('outline', 22, '#555', 1.200)],
        [1254, ic('book', 22, '#555', 1.200)],
        [1290, ic('globe', 22, '#555', 1.100)],
        [1326, ic('pen', 24, '#555', 1.200)],
        [1380, ic('fit', 22, '#555', 1.200)],
        [1419, tx('70%', 17.500, '#888', 'font-family:Roboto,sans-serif')],
        [1447, arw()],
        [1474, ic('minus', 18, '#555')],
        [1593, '<div class="track"><div class="knob"></div></div>'],
        [1713, ic('plusb', 18, '#444')],
        [1748, ic('expand', 23, '#555', 1.200)]
      ])}`;
  }
}
customElements.define('wps-statusbar', WpsStatusbar);

class WinTaskbar extends HTMLElement {
  constructor() {
    super();
    this.attachShadow({ mode: 'open' });
    const tile = (inner, w, bg = 'transparent') => `<div class="tile" style="width:${w}px;background:${bg}">${inner}</div>`;
    const ie = (c, s) => `<span style="font:700 ${s}px 'Liberation Sans',sans-serif;color:${c};line-height:1">e</span>`;
    this.shadowRoot.innerHTML = `
      <style>
        ${BASE}
        :host { display: block; height: 56px; background: linear-gradient(90deg, #24303f 0, #24303f 65%, #252a31 82%, #25272a 100%); flex: none; }
        .row { height: 56px; }
        .search { display: flex; width: 255px; height: 40px; background: #ebebeb; }
        .search .l { flex: 1; display: flex; align-items: center; padding-left: 10px; gap: 0; color: #333; font-size: 14px; }
        .search .b { width: 65px; background: #1e88f5; color: #f1f7ff; font-size: 14.500px; display: flex; align-items: center; justify-content: center; }
        .dot { width: 4px; height: 4px; background: #9db7d6; border-radius: 50%; margin: 0 10px 0 6px; }
        .sep { width: 4px; height: 40px; border-left: 1px solid #3b4654; border-right: 1px solid #3b4654; }
        .tile { height: 56px; display: flex; align-items: center; justify-content: center; box-sizing: border-box; border-bottom: 3px solid #79abdc; }
        .clock { display: flex; flex-direction: column; align-items: center; color: #e6e8ea; font-size: 17.500px; line-height: 23px; }
        .mem { display: flex; flex-direction: column; align-items: center; color: #e8eaec; font-size: 17px; line-height: 23px; }
        .circle { display: flex; align-items: center; justify-content: center; width: 32px; height: 32px; border-radius: 50%; background: radial-gradient(#dff2c8 30%, #a9dc7a 62%, #4a9a2a 100%); }
        .ie { position: relative; display: flex; align-items: center; justify-content: center; width: 34px; height: 36px; }
        .ie .ring { position: absolute; inset: 6px -1px; border: 2.500px solid #f0c030; border-radius: 50%; transform: rotate(-35deg); border-left-color: transparent; border-bottom-color: transparent; }
        .note { position: relative; display: flex; align-items: center; justify-content: center; width: 22px; height: 21px; background: #fff; }
        .note i { display: block; width: 0; height: 0; border: 5px solid transparent; border-left: 7px solid #111; border-right: 0; }
        .note b { position: absolute; left: 14px; top: 12px; width: 17px; height: 16px; background: #e0101a; color: #fff; font: 700 11px "Liberation Sans", sans-serif; display: flex; align-items: center; justify-content: center; }
      </style>
      ${spread(0, [
        [33, ic('win', 25)],
        [103, ic('pinwheel', 32)],
        [266, `<div class="search"><div class="l">${ie('#3c93e6', 27)}<span class="dot"></span><span>你会克隆去世宠物吗</span></div><div class="b">搜索一下</div></div>`],
        [407, '<div class="sep"></div>'],
        [458, `<div class="ie"><span class="ring"></span>${ie('#1d9ae6', 42)}</div>`],
        [528, `<div class="circle">${ie('#3f9a2c', 28)}</div>`],
        [598, tile(ic('folder', 30), 57)],
        [668, tile(ic('fox', 36), 57)],
        [737, tile(ic('wps', 34), 67, '#4b5563')],
        [957, `<div class="mem"><span>62%</span><span>内存占用</span></div>`],
        [997, ic('weather', 32)],
        [1045, ic('redfox', 24)],
        [1079, ic('usbblue', 22)],
        [1112, ic('tgreen', 24)],
        [1146, ic('tgreen', 24)],
        [1179, ic('shield', 24)],
        [1214, ic('wifi', 22)],
        [1246, ic('sync', 25)],
        [1280, ic('nvidia', 24)],
        [1312, ic('qq', 24)],
        [1345, ic('qq', 24)],
        [1379, ic('power', 25)],
        [1413, ic('bt', 24)],
        [1447, ic('usbw', 25)],
        [1479, ic('greenplus', 24)],
        [1513, ic('speaker', 22)],
        [1545, tx('中', 17, '#f0f0f0')],
        [1585, ic('qblue', 25)],
        [1663, `<div class="clock"><span>10:16 周六</span><span>2022/9/17</span></div>`],
        [1744, `<div class="note"><i></i><b>1</b></div>`]
      ])}`;
  }
}
customElements.define('win-taskbar', WinTaskbar);

// Cosas que flotan encima de la ventana: widgets laterales, puntero y marca de agua
class ScreenOverlays extends HTMLElement {
  constructor() {
    super();
    this.attachShadow({ mode: 'open' });
    this.shadowRoot.innerHTML = `
      <style>
        :host { position: absolute; left: 0; top: 0; width: 1780px; height: 1080px; overflow: hidden; pointer-events: none; }
        .meter { position: absolute; border-radius: 4px; background: linear-gradient(#27333f 0, #2b3a46 50%, #4f8a54 62%, #7cc070 85%, #2b3a46 100%); }
        .left { left: 2px; top: 47px; width: 7px; height: 54px; }
        .right { left: 1767px; top: 202px; width: 13px; height: 78px; }
        .strip { position: absolute; left: 1775px; top: 885px; width: 5px; height: 100px; background: #f4ce45; }
        .ptr { position: absolute; left: 1697px; top: 620px; }
        .mark { position: absolute; left: 1391px; top: 1036px; font: 34.400px/27px "Liberation Sans", sans-serif; color: #b8b8b8; white-space: nowrap; }
      </style>
      <div class="meter left"></div>
      <div class="meter right"></div>
      <div class="strip"></div>
      <div class="ptr">${ic('cursorw', 20)}</div>
      <div class="mark">CSDN @QQ3295391197</div>`;
  }
}
customElements.define('screen-overlays', ScreenOverlays);
</script>
</body>
</html>
